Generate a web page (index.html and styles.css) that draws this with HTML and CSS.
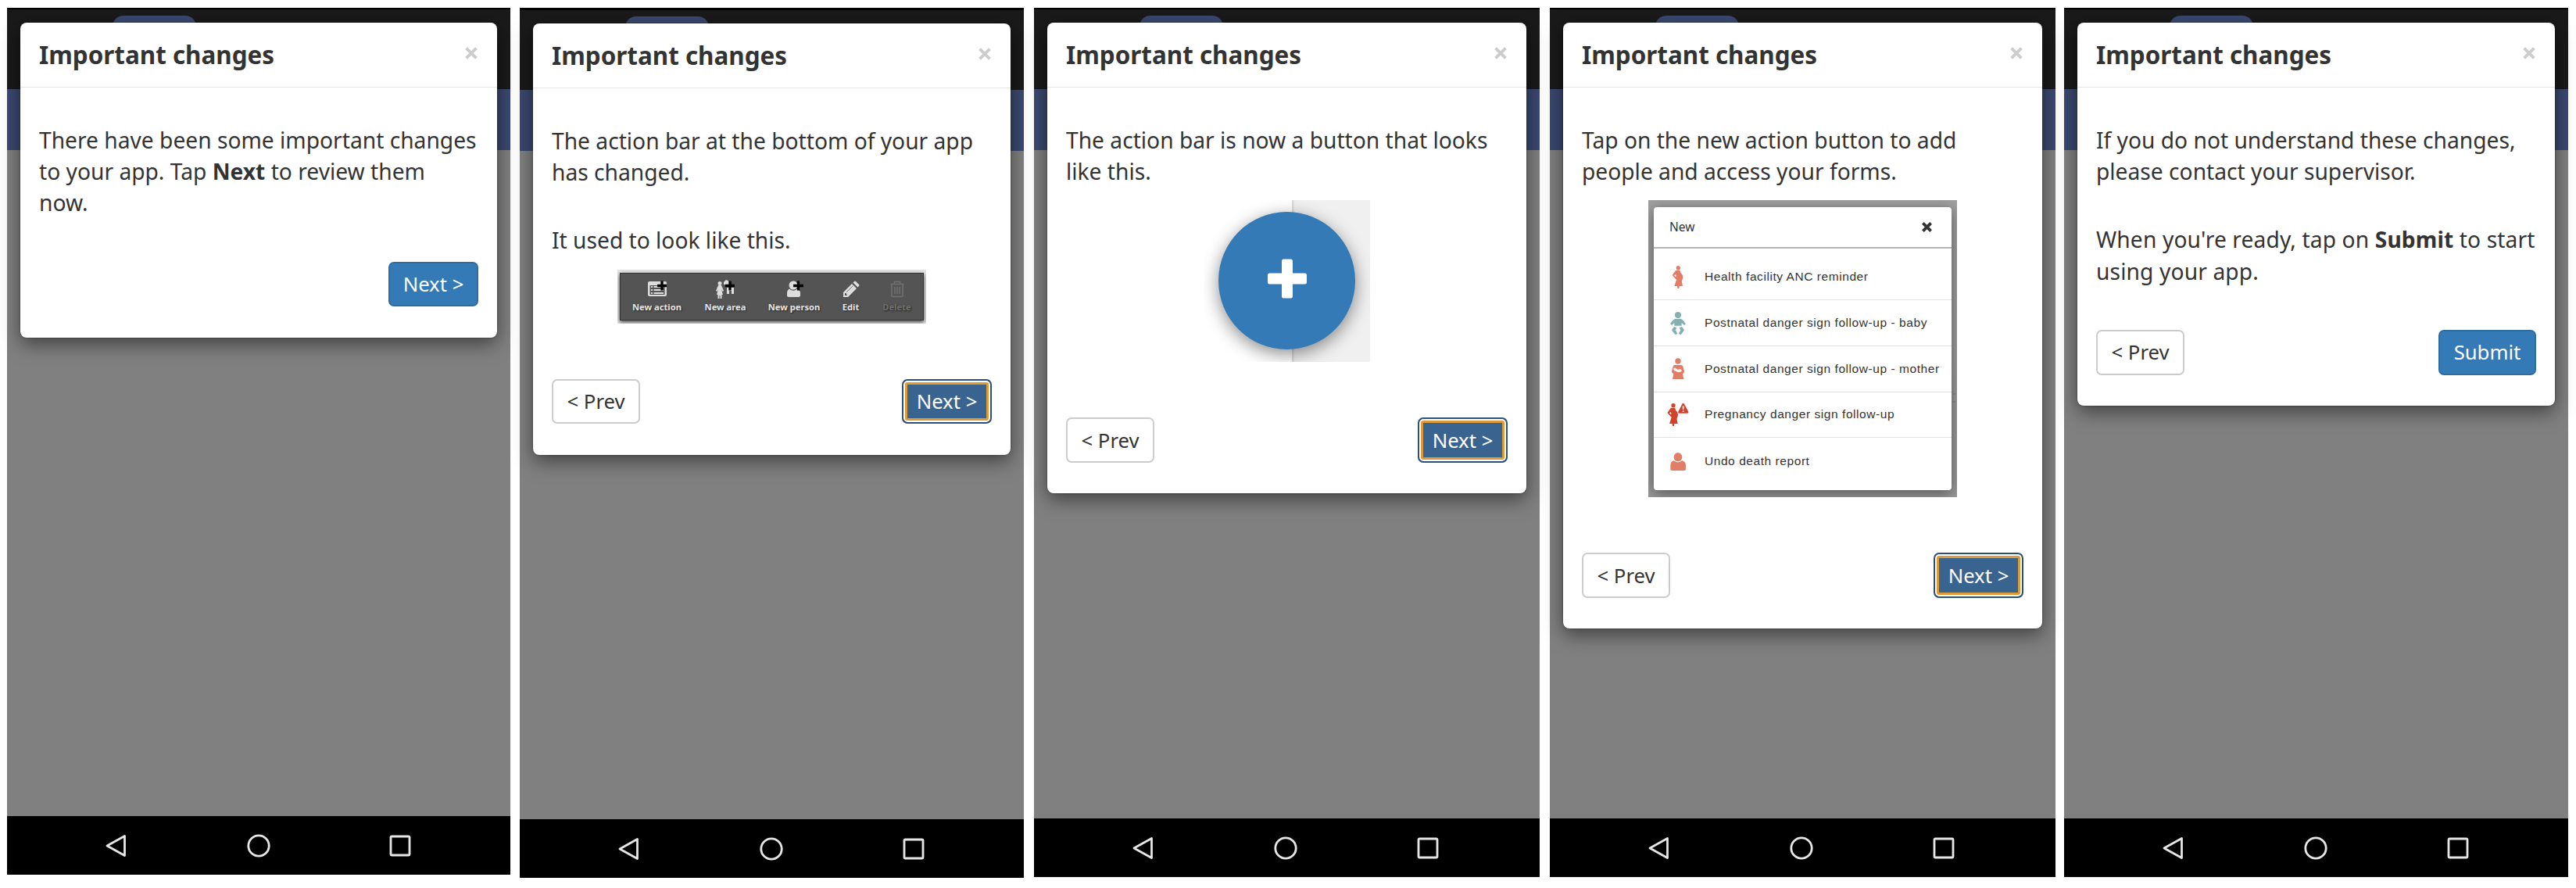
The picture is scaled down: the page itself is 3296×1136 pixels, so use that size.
FILE: index.html
```html
<!DOCTYPE html>
<html lang="en">
<head>
<meta charset="utf-8">
<title>Important changes</title>
<link rel="stylesheet" href="styles.css">
</head>
<body>
<svg class="defs" aria-hidden="true">
  <defs>
    <symbol id="close" viewBox="0 0 15 15"><path d="M1.500 1.500l12 12M13.500 1.500l-12 12" stroke="currentColor" stroke-width="3.600" fill="none"/></symbol>
    <symbol id="back" viewBox="0 0 30 30"><path d="M25.500 2.500V27.500L3 15Z" fill="none" stroke="#e6e6e6" stroke-width="2.800" stroke-linejoin="round"/></symbol>
    <symbol id="home" viewBox="0 0 30 30"><circle cx="15" cy="15" r="13.200" fill="none" stroke="#e6e6e6" stroke-width="2.800"/></symbol>
    <symbol id="recent" viewBox="0 0 30 30"><rect x="3" y="3" width="24" height="24" rx="1.500" fill="none" stroke="#e6e6e6" stroke-width="2.800"/></symbol>
    <symbol id="pregnant" viewBox="0 0 84 88">
      <circle cx="43" cy="8" r="8"/>
      <path fill-rule="evenodd" d="M36 17H47C51 18 52 22 52 27C58 32 62 38 61 46C60 53 56 56 57 63L60 78H47L46 88H40L39 78H28L36 54L22 38C20 36 21 34 23 32L31 21Q33 17 36 17ZM33 32L28 38L34 43Q37 37 33 32Z"/>
    </symbol>
  </defs>
</svg>
<main class="screens">

  <section class="phone phone-first">
    <div class="app">
      <div class="modal">
        <header class="modal-header"><h1>Important changes</h1><svg class="close"><use href="#close"/></svg></header>
        <div class="modal-body">
          <p>There have been some important changes to your app. Tap <b>Next</b> to review them now.</p>
          <div class="actions"><button class="btn primary next">Next &gt;</button></div>
        </div>
      </div>
    </div>
    <nav class="nav"><svg><use href="#back"/></svg><svg><use href="#home"/></svg><svg><use href="#recent"/></svg></nav>
  </section>

  <section class="phone phone-second">
    <div class="app">
      <div class="modal">
        <header class="modal-header"><h1>Important changes</h1><svg class="close"><use href="#close"/></svg></header>
        <div class="modal-body">
          <p>The action bar at the bottom of your app has changed.</p>
          <p>It used to look like this.</p>
          <div class="figure bar-figure">
            <div class="bar">
              <div class="tool">
                <svg viewBox="0 0 24 24"><path fill="#ddd" fill-rule="evenodd" d="M2 2H22Q24 2 24 4V19Q24 21 22 21H2Q0 21 0 19V4Q0 2 2 2ZM2.500 7V19H21.500V7Z"/><path stroke="#ddd" stroke-width="2" d="M4 9H6M7.500 9H20M4 13H6M7.500 13H20M4 17H6M7.500 17H20"/><path stroke="#000" stroke-width="3.300" d="M12 7.500H24M18 1.500V13.500"/></svg>
                <span>New action</span>
              </div>
              <div class="tool">
                <svg viewBox="0 0 24 24"><circle cx="5" cy="4.500" r="2.500" fill="#ddd"/><path fill="#ddd" d="M3 7H7L10 14L8.500 15L7 12L9 19H7.500V24H5.500V20H4.500V24H2.500V19H1L3 12L1.500 15L0 14ZM10 3L13 0L17 2V6H10ZM14 10H23V18H20V14H17V18H14Z"/><path stroke="#000" stroke-width="3.300" d="M12 7.500H24M18 1.500V13.500"/></svg>
                <span>New area</span>
              </div>
              <div class="tool">
                <svg viewBox="0 0 24 24"><circle cx="11" cy="7" r="5.500" fill="#ddd"/><path fill="#ddd" d="M6 11.500Q11 16 16 11.500Q20 13 20 17V20Q20 22 18 22H5Q3 22 3 20V17Q3 13 6 11.500Z"/><path stroke="#000" stroke-width="3.300" d="M11 7.500H24M17.500 1.500V13.500"/></svg>
                <span>New person</span>
              </div>
              <div class="tool">
                <svg viewBox="0 0 24 24"><path fill="#ddd" fill-rule="evenodd" d="M2 22V16L13 5L19 11L8 22ZM14.500 3.500L16 2Q17 1 18 2L22 6Q23 7 22 8L20.500 9.500ZM4 17V20H7L5.500 17Z"/><path d="M6 16L14 8" stroke="#777" stroke-width="1"/></svg>
                <span>Edit</span>
              </div>
              <div class="tool disabled">
                <svg viewBox="0 0 24 24"><path fill="none" stroke="#707070" stroke-width="1.600" d="M3.500 5.500H20.500M8.500 5V2.500H15.500V5M5 6V19.500Q5 21.500 7 21.500H17Q19 21.500 19 19.500V6M9 9V18M12 9V18M15 9V18"/></svg>
                <span>Delete</span>
              </div>
            </div>
          </div>
          <div class="actions after-figure"><button class="btn prev">&lt; Prev</button><button class="btn focused next">Next &gt;</button></div>
        </div>
      </div>
    </div>
    <nav class="nav"><svg><use href="#back"/></svg><svg><use href="#home"/></svg><svg><use href="#recent"/></svg></nav>
  </section>

  <section class="phone phone-third">
    <div class="app">
      <div class="modal">
        <header class="modal-header"><h1>Important changes</h1><svg class="close"><use href="#close"/></svg></header>
        <div class="modal-body">
          <p>The action bar is now a button that looks like this.</p>
          <div class="figure fab-figure">
            <div class="fab"><svg viewBox="0 0 50 50"><path fill="#fff" d="M20.500 0H29.500Q32 0 32 2.500V18H47.500Q50 18 50 20.500V29.500Q50 32 47.500 32H32V47.500Q32 50 29.500 50H20.500Q18 50 18 47.500V32H2.500Q0 32 0 29.500V20.500Q0 18 2.500 18H18V2.500Q18 0 20.500 0Z"/></svg></div>
          </div>
          <div class="actions after-figure"><button class="btn prev">&lt; Prev</button><button class="btn focused next">Next &gt;</button></div>
        </div>
      </div>
    </div>
    <nav class="nav"><svg><use href="#back"/></svg><svg><use href="#home"/></svg><svg><use href="#recent"/></svg></nav>
  </section>

  <section class="phone phone-fourth">
    <div class="app">
      <div class="modal">
        <header class="modal-header"><h1>Important changes</h1><svg class="close"><use href="#close"/></svg></header>
        <div class="modal-body">
          <p>Tap on the new action button to add people and access your forms.</p>
          <div class="figure list-figure">
            <div class="list">
              <div class="list-header"><span>New</span><svg viewBox="0 0 14 14"><path d="M3 3l8 8M11 3L3 11" stroke="#333" stroke-width="4.200" stroke-linecap="square" fill="none"/></svg></div>
              <div class="row first"><svg viewBox="0 0 84 88" fill="#e27d68"><use href="#pregnant"/></svg><span>Health facility ANC reminder</span></div>
              <div class="row"><svg viewBox="0 0 84 88" fill="#84b0b2"><circle cx="42" cy="12" r="12"/><path d="M31 27H53C60 29 66 37 71 45Q72 50 66 50L56 43V53H28V43L18 50Q12 50 13 45C18 37 24 29 31 27ZM27 57L37 61L32 70L39 82Q38 88 31 87L19 72Q18 69 20 66ZM57 57L47 61L52 70L45 82Q46 88 53 87L65 72Q66 69 64 66Z"/></svg><span>Postnatal danger sign follow-up - baby</span></div>
              <div class="row"><svg viewBox="0 0 84 88" fill="#e27d68"><circle cx="42" cy="15" r="11"/><path fill-rule="evenodd" d="M28 30H55Q60 31 62 38L66 54Q66 60 60 64L64 84H21L25 64Q18 61 18 54L22 38Q24 31 28 30ZM25 47Q26 53 35 54Q45 61 54 55Q59 51 54 47Q48 44 42 48Q37 47 34 42Q29 39 25 43Z"/></svg><span>Postnatal danger sign follow-up - mother</span></div>
              <div class="row"><svg viewBox="0 0 84 88" fill="#d2422d"><use href="#pregnant" x="-19" width="84" height="88"/><path d="M58 2Q62-3 66 2L82 32Q84 38 78 38H47Q41 38 43 32Z"/><path d="M62 10V24M62 28V33" stroke="#fff" stroke-width="5"/></svg><span>Pregnancy danger sign follow-up</span></div>
              <div class="row last"><svg viewBox="0 0 84 88" fill="#e27d68"><ellipse cx="42" cy="26" rx="16" ry="17"/><path d="M26 40Q42 53 58 40Q71 43 72 57V73Q72 78 67 78H18Q13 78 13 73V57Q13 43 26 40Z"/></svg><span>Undo death report</span></div>
            </div>
            <i class="page-mark"></i>
          </div>
          <div class="actions after-figure"><button class="btn prev">&lt; Prev</button><button class="btn focused next">Next &gt;</button></div>
        </div>
      </div>
    </div>
    <nav class="nav"><svg><use href="#back"/></svg><svg><use href="#home"/></svg><svg><use href="#recent"/></svg></nav>
  </section>

  <section class="phone phone-fifth">
    <div class="app">
      <div class="modal">
        <header class="modal-header"><h1>Important changes</h1><svg class="close"><use href="#close"/></svg></header>
        <div class="modal-body">
          <p>If you do not understand these changes, please contact your supervisor.</p>
          <p class="closing">When you're ready, tap on <b>Submit</b> to start using your app.</p>
          <div class="actions"><button class="btn prev">&lt; Prev</button><button class="btn primary submit">Submit</button></div>
        </div>
      </div>
    </div>
    <nav class="nav"><svg><use href="#back"/></svg><svg><use href="#home"/></svg><svg><use href="#recent"/></svg></nav>
  </section>

</main>
</body>
</html>
```
FILE: styles.css
```css
* { box-sizing: border-box; }

body {
  margin: 0;
  background: #fff;
  color: #333;
  font-family: "Noto Sans", "Liberation Sans", sans-serif;
  font-size: 28.2px;
  line-height: 40.4px;
}

.defs { position: absolute; width: 0; height: 0; }

.screens {
  display: flex;
  align-items: flex-start;
  gap: 12px;
  height: 1136px;
  padding: 10px 9px 0;
}

.phone {
  flex: none;
  display: flex;
  flex-direction: column;
  width: 645px;
  height: 1112px;
}
.phone-first { width: 644px; height: 1109px; }
.phone-second { height: 1113px; }
.phone-third { width: 647px; margin-left: 1px; }
.phone-fourth { width: 647px; margin-left: 1px; }
.phone-fifth { margin-left: -1px; }

.app {
  position: relative;
  flex: 1;
  padding: 17px 17px 0;
  border-top: 2px solid #000;
  background: linear-gradient(#1a1a1a 0 102px, #3b4971 102px 180px, #808080 180px);
}
.phone-second .app { border-top-width: 3px; }

/* blue unread pill that shows above the dialog */
.app::before {
  content: "";
  position: absolute;
  left: 135px;
  top: 8px;
  width: 107px;
  height: 30px;
  border-radius: 14px;
  background: #3b4971;
}

.modal {
  position: relative;
  border-radius: 8px;
  background: #fff;
  box-shadow: 0 8px 24px rgba(0, 0, 0, .5), 0 0 2px rgba(0, 0, 0, .5);
}

.modal-header {
  display: flex;
  justify-content: space-between;
  align-items: flex-start;
  height: 83px;
  padding: 21px 25px 0 24px;
  border-bottom: 1px solid #e5e5e5;
}
.modal-header h1 {
  margin: 0;
  font-size: 31.400px;
  line-height: 39px;
  font-weight: 700;
}
.close { width: 16px; height: 16px; margin-top: 10px; color: #ccc; }

.modal-body { padding: 46.500px 24px 39.500px; }

p { margin: 0; }
p + p { margin-top: 47px; }
.closing { letter-spacing: .12px; }

.actions {
  display: flex;
  justify-content: space-between;
  margin-top: 55px;
}
.after-figure { margin-top: 71px; }

.btn {
  height: 57.500px;
  padding: 0;
  border: 2px solid #ccc;
  border-radius: 7px;
  background: #fff;
  color: #333;
  font: inherit;
  font-size: 25.700px;
  line-height: 53px;
}
.prev { width: 113px; }
.next { width: 115px; margin-left: auto; }
.submit { width: 125px; }
.primary { border-color: #2e6da4; background: #337ab7; color: #fff; }
.focused {
  border: 2px solid #2d5078;
  background: #3a6490;
  color: #fff;
  box-shadow: inset 0 0 0 2px #fff, inset 0 0 0 5px #de9a36;
}

.figure { margin: 17px auto 0; }

.bar-figure {
  width: 395px;
  height: 69px;
  margin-left: 84px;
  padding: 4px 3px;
  background: #e3e3e3;
  overflow: hidden;
}
.bar {
  display: grid;
  grid-template-columns: 93px 82px 94px 51px 67px;
  height: 61px;
  border: 1px solid #333;
  background: #545454;
  box-shadow: 0 2px 5px #444;
}
.tool {
  display: flex;
  flex-direction: column;
  align-items: center;
  padding-top: 8px;
  color: #e6e6e6;
  font-size: 11.200px;
  font-weight: 700;
  line-height: 16px;
  white-space: nowrap;
  text-shadow: 1px 1px 2px #222;
}
.tool svg { width: 24px; height: 24px; margin-bottom: 3px; overflow: visible; }
.tool.disabled { color: #6f6f6f; }

.fab-figure {
  width: 213px;
  height: 207px;
  padding: 15px 19px 0;
  background: linear-gradient(90deg, #fff 0 112.500px, #dcdcdc 113px 115px, #f0f0f0 116px);
  overflow: hidden;
}
.fab {
  display: flex;
  align-items: center;
  justify-content: center;
  width: 175px;
  height: 176px;
  padding-bottom: 5px;
  border-radius: 50%;
  background: #337ab7;
  box-shadow: 0 6px 22px rgba(0, 0, 0, .45);
}
.fab svg { width: 50px; height: 51px; }

.list-figure {
  position: relative;
  width: 395px;
  height: 380px;
  padding: 8.500px 7px 0;
  background: linear-gradient(#a0a0a0, #999);
  overflow: hidden;
}
.list {
  position: relative;
  height: 362.500px;
  border-radius: 4px;
  background: #fff;
  box-shadow: 0 4px 18px rgba(0, 0, 0, .45);
  font-family: "Liberation Sans", Arial, sans-serif;
  font-size: 15.500px;
  letter-spacing: .56px;
}
.list-header {
  display: flex;
  align-items: center;
  justify-content: space-between;
  height: 53px;
  padding: 0 25px 0 20px;
  border-bottom: 2px solid #b4b4b4;
  font-family: "Noto Sans", sans-serif;
  font-size: 15.500px;
  letter-spacing: 0;
}
.list-header svg { width: 13px; height: 13px; }
.row {
  display: flex;
  align-items: center;
  gap: 20.500px;
  height: 58.700px;
  padding-left: 16.500px;
  border-bottom: 1px solid #e0e0e0;
  white-space: nowrap;
}
.row svg { flex: none; width: 28px; height: 29.300px; overflow: visible; }
.first { height: 66.500px; padding-top: 8px; }
.last { height: 60px; border-bottom: 0; }

/* sliver of the page behind the list, between its edge and the frame */
.page-mark {
  position: absolute;
  right: 2px;
  top: 244px;
  width: 4px;
  height: 15px;
  border-left: 1px solid #777;
  border-bottom: 2px solid #777;
  background: linear-gradient(transparent 3px, #777 3px 5px, transparent 5px);
}

.nav {
  display: flex;
  align-items: center;
  justify-content: space-between;
  height: 75px;
  padding: 0 126px 0 125px;
  background: #000;
}
.nav svg { width: 30px; height: 30px; }
.phone-third .nav, .phone-fourth .nav { padding-right: 128px; }
```
